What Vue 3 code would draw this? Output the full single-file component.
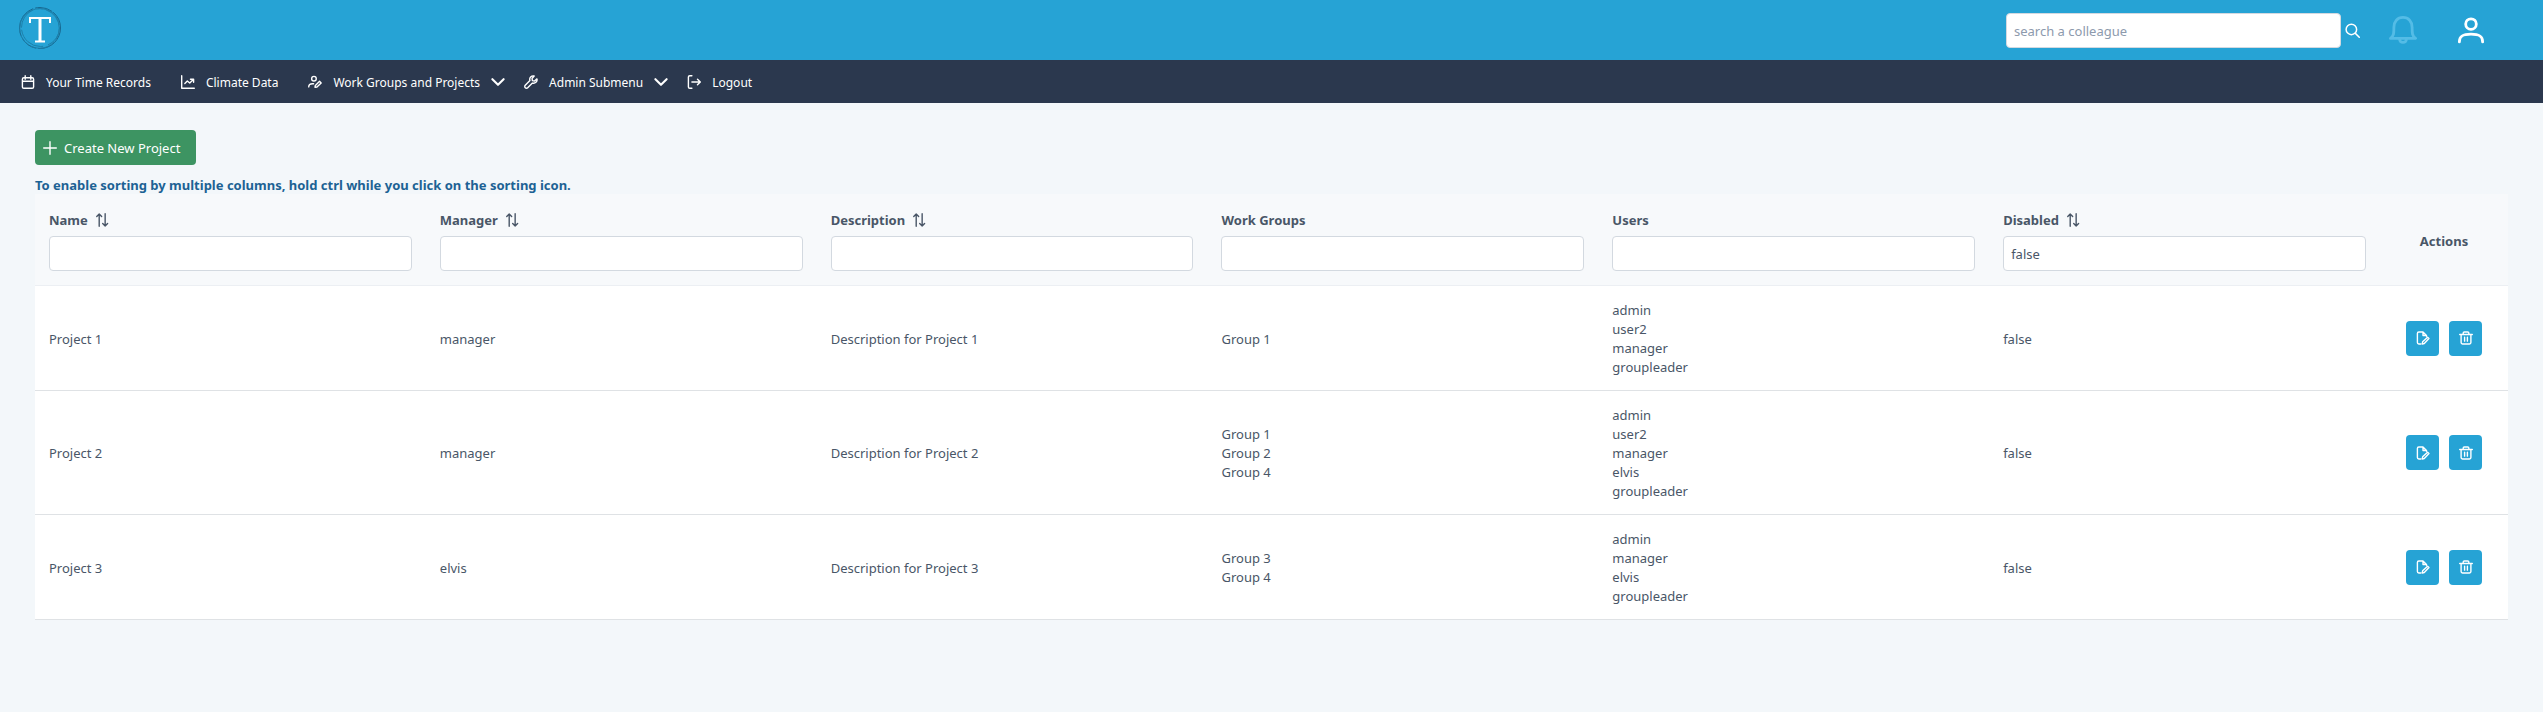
<script setup>
import { reactive } from 'vue'

const menu = [
  { label: 'Your Time Records', icon: 'calendar' },
  { label: 'Climate Data', icon: 'chart' },
  { label: 'Work Groups and Projects', icon: 'userEdit', sub: true },
  { label: 'Admin Submenu', icon: 'wrench', sub: true },
  { label: 'Logout', icon: 'logout' }
]

const icons = {
  calendar: 'M4 4H16Q18 4 18 6V17Q18 19 16 19H4Q2 19 2 17V6Q2 4 4 4ZM2 9H18M6 1V6M14 1V6',
  chart: 'M1 1V19H19M5.500 12L9 8.500L12.500 11.500L18 6M13.500 6H18V10.500',
  userEdit: 'M8.500 2A3.300 3.300 0 1 0 8.500 8.600A3.300 3.300 0 1 0 8.500 2M1 17C1 13.500 3 12.500 6.500 12.500H8M10 17.500L10.500 15L16.500 9L18.800 11.300L12.800 17.300Z',
  wrench: 'M14.500 1.500A5 5 0 0 0 8.500 8L1.800 14.700A2.300 2.300 0 0 0 5.300 18.200L12 11.500A5 5 0 0 0 18.500 5.500L15 8.500L12 8L11.500 5Z',
  logout: 'M7 1H4Q2 1 2 3V17Q2 19 4 19H7M7 10H19M15 6L19 10L15 14',
  chevron: 'M2 6L10 14L18 6',
  plus: 'M10 1V19M1 10H19',
  sort: 'M6 19V1.500M2.500 5L6 1.500L9.500 5M14.500 1V18.500M11 15L14.500 18.500L18 15',
  search: 'M8.500 1.500A7 7 0 1 0 8.500 15.500A7 7 0 1 0 8.500 1.500M13.500 13.500L19 19',
  bell: 'M1 16C3.500 14.500 3.500 12 3.500 8C3.500 4 6 1 10 1S16.500 4 16.500 8C16.500 12 16.500 14.500 19 16ZM7.500 16.500C8 19.700 12 19.700 12.500 16.500',
  user: 'M10 2A3.800 3.800 0 1 0 10 9.600A3.800 3.800 0 1 0 10 2M1.700 18.500C1.700 14.500 4 13 10 13S18.300 14.500 18.300 18.500',
  fileEdit: 'M7 18.500H4Q2 18.500 2 16.500V3.500Q2 1.500 4 1.500H10L15 6.500V7.500M10 1.500V6.500H15M9 18.500L9.500 15.500L16.500 8.800L18.500 10.800L11.800 17.800Z',
  trash: 'M1 5H19M6 5V3Q6 1.500 7.500 1.500H12.500Q14 1.500 14 3V5M3 5V16.500Q3 18.500 5 18.500H15Q17 18.500 17 16.500V5M8 9V14.500M12 9V14.500'
}

const columns = [
  { id: 'name', label: 'Name', sort: true },
  { id: 'manager', label: 'Manager', sort: true },
  { id: 'description', label: 'Description', sort: true },
  { id: 'groups', label: 'Work Groups' },
  { id: 'users', label: 'Users' },
  { id: 'disabled', label: 'Disabled', sort: true }
]

const filters = reactive({ name: '', manager: '', description: '', groups: '', users: '', disabled: 'false' })

const projects = [
  { name: 'Project 1', manager: 'manager', description: 'Description for Project 1', groups: ['Group 1'], users: ['admin', 'user2', 'manager', 'groupleader'], disabled: 'false' },
  { name: 'Project 2', manager: 'manager', description: 'Description for Project 2', groups: ['Group 1', 'Group 2', 'Group 4'], users: ['admin', 'user2', 'manager', 'elvis', 'groupleader'], disabled: 'false' },
  { name: 'Project 3', manager: 'elvis', description: 'Description for Project 3', groups: ['Group 3', 'Group 4'], users: ['admin', 'manager', 'elvis', 'groupleader'], disabled: 'false' }
]

const lines = (value) => (Array.isArray(value) ? value : [value])
</script>

<template>
  <div class="page">
    <header class="topbar">
      <a class="logo" href="#" aria-label="Home">
        <svg viewBox="0 0 44 44" aria-hidden="true">
          <circle class="ring" cx="22" cy="22" r="20.500" stroke-dasharray="34 2 18 1" />
          <circle class="ring thin" cx="22.500" cy="21.500" r="19" stroke-dasharray="22 5 30 2" />
          <circle class="ring thin" cx="21.500" cy="22.500" r="19.800" stroke-dasharray="12 3 26 1" />
          <path class="serif" d="M12 17V12H32V17M17 35.500H27" />
          <path class="stem" d="M22 12V35" />
        </svg>
      </a>
      <form class="search" role="search" @submit.prevent>
        <input type="text" placeholder="search a colleague" aria-label="search a colleague" />
        <button type="submit" class="plain" aria-label="Search">
          <svg class="icon" viewBox="0 0 20 20"><path :d="icons.search" /></svg>
        </button>
      </form>
      <button type="button" class="plain bell" aria-label="Notifications">
        <svg class="icon" viewBox="0 0 20 20"><path :d="icons.bell" /></svg>
      </button>
      <button type="button" class="plain user" aria-label="Profile">
        <svg class="icon" viewBox="0 0 20 20"><path :d="icons.user" /></svg>
      </button>
    </header>

    <nav class="menu">
      <a v-for="item in menu" :key="item.label" href="#" :class="{ sub: item.sub }">
        <svg class="icon" viewBox="0 0 20 20"><path :d="icons[item.icon]" /></svg>
        <span>{{ item.label }}</span>
        <svg v-if="item.sub" class="icon chevron" viewBox="0 0 20 20"><path :d="icons.chevron" /></svg>
      </a>
    </nav>

    <main>
      <button type="button" class="create">
        <svg class="icon" viewBox="0 0 20 20"><path :d="icons.plus" /></svg>
        <span>Create New Project</span>
      </button>
      <p class="hint">To enable sorting by multiple columns, hold ctrl while you click on the sorting icon.</p>
      <table>
        <thead>
          <tr>
            <th v-for="col in columns" :key="col.id" scope="col">
              <div class="title">
                <label :for="`filter-${col.id}`">{{ col.label }}</label>
                <button v-if="col.sort" type="button" class="plain" :aria-label="`Sort by ${col.label}`">
                  <svg class="icon sort" viewBox="0 0 20 20"><path :d="icons.sort" /></svg>
                </button>
              </div>
              <input :id="`filter-${col.id}`" v-model="filters[col.id]" type="text" />
            </th>
            <th scope="col" class="actions">Actions</th>
          </tr>
        </thead>
        <tbody>
          <tr v-for="project in projects" :key="project.name">
            <td v-for="col in columns" :key="col.id">
              <div v-for="line in lines(project[col.id])" :key="line">{{ line }}</div>
            </td>
            <td class="actions">
              <div class="buttons">
                <button type="button" :aria-label="`Edit ${project.name}`">
                  <svg class="icon" viewBox="0 0 20 20"><path :d="icons.fileEdit" /></svg>
                </button>
                <button type="button" :aria-label="`Delete ${project.name}`">
                  <svg class="icon" viewBox="0 0 20 20"><path :d="icons.trash" /></svg>
                </button>
              </div>
            </td>
          </tr>
        </tbody>
      </table>
    </main>
  </div>
</template>

<style>
body {
  background: #f3f7fa;
}
</style>

<style scoped>
.page {
  min-height: 100vh;
  color: #495667;
  font: 13px/19px "Segoe UI", "Noto Sans", "Open Sans", sans-serif;
}
.page * {
  box-sizing: border-box;
}
button,
input {
  font: inherit;
}
button {
  cursor: pointer;
}
.icon {
  display: block;
  flex: none;
  width: 14px;
  height: 14px;
  fill: none;
  stroke: currentColor;
  stroke-width: 2;
  stroke-linecap: round;
  stroke-linejoin: round;
}
.plain {
  padding: 0;
  border: 0;
  background: none;
  color: inherit;
}
.topbar {
  display: flex;
  align-items: center;
  height: 60px;
  padding: 0 58px 0 18px;
  background: #26a3d5;
  color: #fff;
}
.logo {
  margin: 0 auto 4px 0;
}
.logo svg {
  display: block;
  width: 44px;
  height: 44px;
  fill: none;
}
.ring {
  stroke: #17678f;
  stroke-width: 1;
}
.thin {
  stroke: #1d80ab;
}
.serif {
  stroke: #fff;
  stroke-width: 2;
}
.stem {
  stroke: #fff;
  stroke-width: 3;
}
.search {
  display: flex;
  align-items: center;
  gap: 4px;
}
input {
  display: block;
  width: 100%;
  height: 35px;
  padding: 0 7px;
  border: 1px solid #d3d9e0;
  border-radius: 4px;
  outline: 0;
  background: #fff;
  color: #495667;
}
input::placeholder {
  color: #8d9aad;
  opacity: 1;
}
.search input {
  width: 335px;
  padding-top: 2px;
}
.search .icon {
  width: 15px;
  height: 15px;
}
.bell {
  margin: 0 40px 0 29px;
  color: #54bce6;
}
.bell .icon {
  width: 28px;
  height: 28px;
  stroke-width: 2;
}
.user .icon {
  width: 28px;
  height: 28px;
}
.menu {
  display: flex;
  gap: 2px;
  height: 43px;
  padding: 0 7px;
  background: #2b384e;
  color: #fff;
  font-size: 12px;
}
.menu a {
  display: flex;
  align-items: center;
  gap: 11px;
  padding: 0 14px;
  color: inherit;
  text-decoration: none;
}
.menu span,
.create span {
  padding-top: 2px;
}
.menu .sub {
  padding-right: 3px;
}
.menu .chevron {
  stroke-width: 3;
}
main {
  padding: 27px 35px;
}
.create {
  display: flex;
  align-items: center;
  gap: 7px;
  height: 35px;
  padding: 0 16px 0 8px;
  border: 0;
  border-radius: 4px;
  background: #3d9462;
  color: #fff;
}
.hint {
  margin: 11px 0 0;
  color: #1c6294;
  font-weight: 700;
  line-height: 18px;
}
table {
  width: 100%;
  border-collapse: separate;
  border-spacing: 0;
  table-layout: fixed;
}
th,
td {
  padding: 14px;
  border-bottom: 1px solid #dfe2e5;
  text-align: left;
}
th {
  border-color: #eceff3;
  background: #f7f9fb;
  font-weight: 700;
}
th input {
  font-weight: 400;
}
td {
  padding: 15px 14px 13px;
  background: #fff;
}
.title {
  display: flex;
  align-items: center;
  gap: 7px;
  height: 24px;
  margin-bottom: 4px;
}
.actions {
  width: 128px;
  text-align: center;
}
th.actions {
  padding-top: 17px;
}
td.actions {
  padding: 14px;
}
.buttons {
  display: flex;
  justify-content: center;
  gap: 10px;
}
.buttons button {
  display: flex;
  align-items: center;
  justify-content: center;
  width: 33px;
  height: 35px;
  padding: 0;
  border: 0;
  border-radius: 4px;
  background: #26a3d5;
  color: #fff;
}
</style>
